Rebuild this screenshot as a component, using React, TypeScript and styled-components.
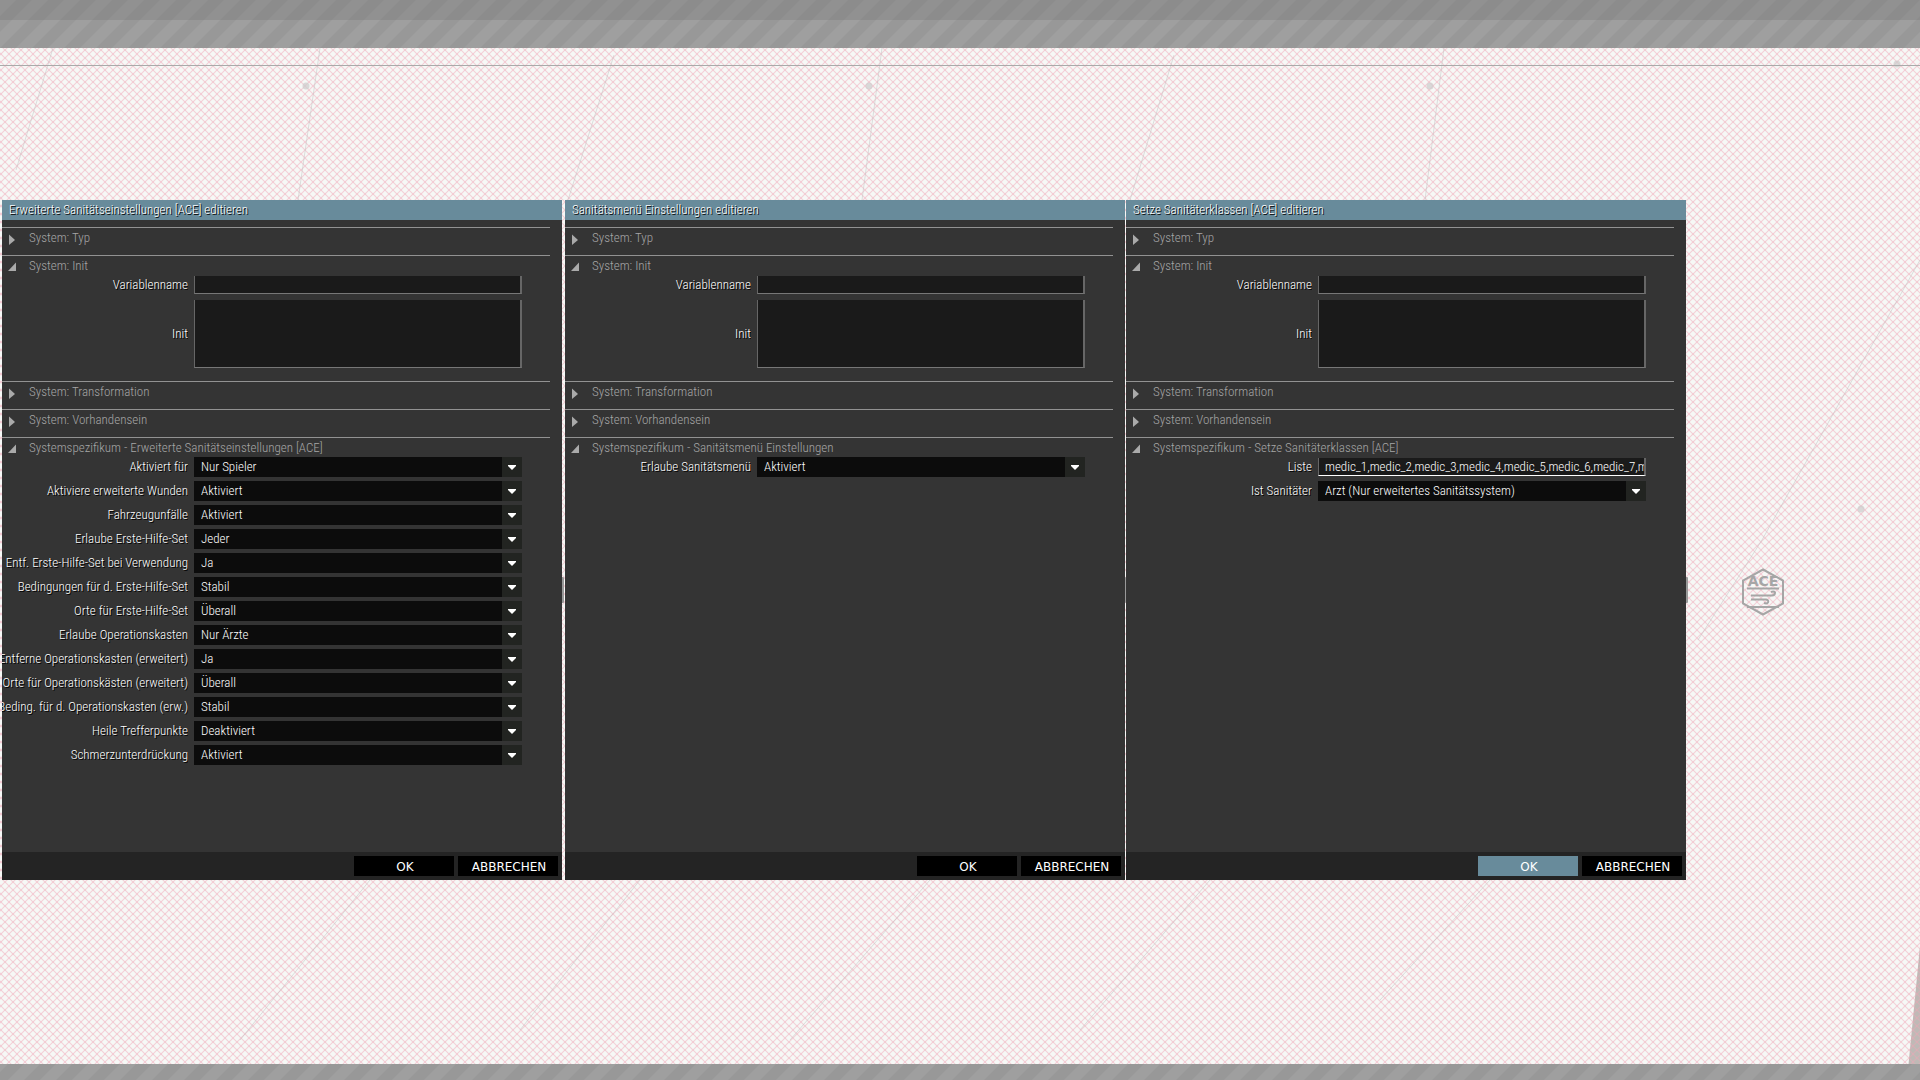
import React, { useId, useState } from "react";
import styled, { createGlobalStyle } from "styled-components";

const ui = '"Roboto Condensed", Roboto, sans-serif';
const accent = "#688b9b";

const GlobalStyle = createGlobalStyle`
  *, *::before, *::after { box-sizing: border-box; }
  body { margin: 0; background: #f7f5f3; overflow: hidden; }
`;

const Page = styled.div`
  position: relative;
  min-height: 100vh;
  display: flex;
  flex-direction: column;
  font: 300 13px/20px ${ui};
  color: #fff;
`;

const Map = styled.svg`
  position: absolute;
  inset: 0;
  width: 100%;
  height: 100%;
`;

const Workspace = styled.main`
  position: relative;
  flex: 1;
  display: flex;
  align-items: center;
  padding: 0 234px 0 2px;
`;

const Panel = styled.form<{ $space: number }>`
  flex: 1 1 0;
  min-width: 0;
  min-height: 680px;
  margin-left: ${(p) => p.$space}px;
  display: flex;
  flex-direction: column;
  background: #343434;
`;

const Title = styled.h2`
  margin: 0;
  padding: 0 7px;
  height: 20px;
  font: inherit;
  background: ${accent};
  text-shadow: 1px 1px 0 #000;
`;

const Body = styled.div`
  flex: 1;
  padding: 7px 12px 0 0;
`;

const SectionBox = styled.section`
  border-top: 1px solid #929292;
  padding-bottom: 8px;
`;

const SectionToggle = styled.button`
  display: flex;
  align-items: center;
  gap: 10px;
  width: 100%;
  height: 19px;
  padding: 0 6px;
  border: 0;
  background: none;
  color: #a6a6a6;
  font: inherit;
  text-align: left;
  svg { flex: none; margin-top: 4px; }
`;

const Row = styled.div`
  display: grid;
  grid-template-columns: 186px minmax(0, 1fr);
  column-gap: 6px;
  align-items: center;
  margin-bottom: 4px;
  padding-right: 28px;
`;

const Label = styled.label`
  display: flex;
  justify-content: flex-end;
  overflow: hidden;
  white-space: nowrap;
  text-shadow: 1px 1px 0 #000;
`;

const TextBox = styled.input<{ $active?: boolean }>`
  width: 100%;
  height: 18px;
  margin: 1px 0;
  padding: 0 0 0 6px;
  border: solid #666;
  border-width: 0 2px 1px 1px;
  border-bottom-color: ${(p) => (p.$active ? "#fff" : "#777")};
  border-radius: 0;
  outline: 0;
  background: #1a1a1a;
  color: inherit;
  font: inherit;
`;

const TextArea = styled.textarea`
  display: block;
  width: 100%;
  height: 68px;
  margin: 1px 0;
  padding: 0 6px;
  border: solid #666;
  border-width: 0 2px 1px 1px;
  border-bottom-color: #777;
  border-radius: 0;
  outline: 0;
  resize: none;
  background: #1a1a1a;
  color: inherit;
  font: inherit;
`;

const SelectBox = styled.div`
  display: flex;
  position: relative;
`;

const Select = styled.select`
  appearance: none;
  width: 100%;
  height: 20px;
  padding: 0 24px 0 7px;
  border: 0;
  border-radius: 0;
  outline: 0;
  background: #0c0c0c;
  color: inherit;
  font: inherit;
`;

const SelectArrow = styled.span`
  position: absolute;
  inset: 0 0 0 auto;
  width: 20px;
  display: grid;
  place-items: center;
  background: #222421;
  pointer-events: none;
`;

const Footer = styled.footer`
  display: flex;
  justify-content: flex-end;
  gap: 4px;
  padding: 4px;
  background: #242424;
`;

const ActionButton = styled.button<{ $highlight?: boolean }>`
  width: 100px;
  height: 20px;
  padding: 2px 0 0 2px;
  border: 0;
  background: ${(p) => (p.$highlight ? accent : "#000")};
  color: #fff;
  font: 400 12px/18px "DejaVu Sans", sans-serif;
`;

function Section({ title, open = false, children }: { title: string; open?: boolean; children?: React.ReactNode }) {
  const [expanded, setExpanded] = useState(open);
  return (
    <SectionBox>
      <SectionToggle type="button" aria-expanded={expanded} onClick={() => setExpanded(!expanded)}>
        <svg width="11" height="12" viewBox="0 0 11 12" fill="#aaa" aria-hidden="true">
          <path d={expanded ? "M8 .5V9H0Z" : "M1 .5L7 6L1 11Z"} />
        </svg>
        {title}
      </SectionToggle>
      {expanded && children}
    </SectionBox>
  );
}

function Choice({ label, value }: { label: string; value: string }) {
  const id = useId();
  return (
    <Row>
      <Label htmlFor={id}>{label}</Label>
      <SelectBox>
        <Select id={id} defaultValue={value}>
          <option>{value}</option>
        </Select>
        <SelectArrow>
          <svg width="8" height="5" viewBox="0 0 8 5" fill="#fff" aria-hidden="true"><path d="M0 0H8V1L4 5L0 1Z" /></svg>
        </SelectArrow>
      </SelectBox>
    </Row>
  );
}

function TextField({ label, value = "", active }: { label: string; value?: string; active?: boolean }) {
  const id = useId();
  return (
    <Row>
      <Label htmlFor={id}>{label}</Label>
      <TextBox id={id} type="text" defaultValue={value} $active={active} />
    </Row>
  );
}

function InitField() {
  const id = useId();
  return (
    <Row>
      <Label htmlFor={id}>Init</Label>
      <TextArea id={id} />
    </Row>
  );
}

type DialogProps = { title: string; specific: string; space?: number; okActive?: boolean; children: React.ReactNode };

function Dialog({ title, specific, space = 0, okActive, children }: DialogProps) {
  return (
    <Panel $space={space} onSubmit={(e) => e.preventDefault()}>
      <Title>{title}</Title>
      <Body>
        <Section title="System: Typ" />
        <Section title="System: Init" open>
          <TextField label="Variablenname" />
          <InitField />
        </Section>
        <Section title="System: Transformation" />
        <Section title="System: Vorhandensein" />
        <Section title={`Systemspezifikum - ${specific}`} open>{children}</Section>
      </Body>
      <Footer>
        <ActionButton type="submit" $highlight={okActive}>OK</ActionButton>
        <ActionButton type="button">ABBRECHEN</ActionButton>
      </Footer>
    </Panel>
  );
}

const medicalSettings: [string, string][] = [
  ["Aktiviert für", "Nur Spieler"],
  ["Aktiviere erweiterte Wunden", "Aktiviert"],
  ["Fahrzeugunfälle", "Aktiviert"],
  ["Erlaube Erste-Hilfe-Set", "Jeder"],
  ["Entf. Erste-Hilfe-Set bei Verwendung", "Ja"],
  ["Bedingungen für d. Erste-Hilfe-Set", "Stabil"],
  ["Orte für Erste-Hilfe-Set", "Überall"],
  ["Erlaube Operationskasten", "Nur Ärzte"],
  ["Entferne Operationskasten (erweitert)", "Ja"],
  ["Orte für Operationskästen (erweitert)", "Überall"],
  ["Beding. für d. Operationskasten (erw.)", "Stabil"],
  ["Heile Trefferpunkte", "Deaktiviert"],
  ["Schmerzunterdrückung", "Aktiviert"],
];

const contours = [
  "M53 48L16 170", "M320 48L298 200", "M614 55L568 200", "M882 48L862 200", "M1174 55L1130 200",
  "M1444 48L1425 200", "M1920 260L1762 540L1698 640", "M370 880L240 1040",
  "M640 880L520 1030", "M930 880L790 1040", "M1210 880L1080 1030", "M1490 880L1380 1000",
];
const markers = [[306, 86], [869, 86], [1430, 86], [1897, 64], [1861, 509]];

function MapBackdrop() {
  return (
    <Map viewBox="0 0 1920 1080" preserveAspectRatio="xMidYMid slice" aria-hidden="true">
      <defs>
        <pattern id="hatch" x="5" y="2" width="8" height="8" patternUnits="userSpaceOnUse">
          <path d="M-1 -1L9 9M-1 7L1 9M7 -1L9 1" stroke="#f0a4b4" strokeOpacity=".46" strokeWidth="1.2" />
          <path d="M-1 9L9 -1M-1 1L1 -1M7 9L9 7" stroke="#f0a4b4" strokeOpacity=".46" strokeWidth="1.2" />
        </pattern>
        <pattern id="stripes" width="32" height="32" patternUnits="userSpaceOnUse">
          <path d="M0 16L16 0H32L0 32ZM16 32L32 16V32Z" fill="#888" fillOpacity=".3" />
        </pattern>
      </defs>
      <rect width="1920" height="1080" fill="#f6f8f6" />
      <path d="M1920 946L1907 1080H1920Z" fill="#bfb9b6" />
      <rect width="1920" height="1080" fill="url(#hatch)" />
      <g fill="none" stroke="#c4c4c4" strokeOpacity=".55">
        {contours.map((d) => <path key={d} d={d} />)}
      </g>
      {markers.map(([x, y]) => <circle key={x} cx={x} cy={y} r="3.5" fill="#ccc" fillOpacity=".7" />)}
      <rect y="65" width="1920" height="1" fill="#aaa" />
      <rect width="1920" height="48" fill="#9f9f9f" />
      <rect y="1064" width="1920" height="16" fill="#9f9f9f" />
      <rect width="1920" height="48" fill="url(#stripes)" />
      <rect y="1064" width="1920" height="16" fill="url(#stripes)" />
      <rect width="1920" height="20" fill="#666" fillOpacity=".25" />
      {[560, 1122, 1684].map((x) => <rect key={x} x={x} y="577" width="4" height="26" rx="1" fill="#999" />)}
      <g fill="none" stroke="#a6a6a6" strokeWidth="2">
        <path d="M1763 569.500L1783 580.500V603.500L1763 614.500L1743 603.500V580.500Z" />
        <path d="M1747 588.500H1779M1747 607H1779" />
        <path d="M1751 595.500H1772Q1775 595.500 1775 592.500Q1774 591 1771 592M1751 599.500H1766Q1769 600 1768 602.500Q1767 604 1764 603" />
      </g>
      <text x="1763" y="586" textAnchor="middle" fill="#a6a6a6" fontFamily="DejaVu Sans, sans-serif" fontWeight="700" fontSize="14">ACE</text>
    </Map>
  );
}

export default function App() {
  return (
    <Page>
      <GlobalStyle />
      <MapBackdrop />
      <Workspace>
        <Dialog title="Erweiterte Sanitätseinstellungen [ACE] editieren" specific="Erweiterte Sanitätseinstellungen [ACE]">
          {medicalSettings.map(([label, value]) => <Choice key={label} label={label} value={value} />)}
        </Dialog>
        <Dialog title="Sanitätsmenü Einstellungen editieren" specific="Sanitätsmenü Einstellungen" space={3}>
          <Choice label="Erlaube Sanitätsmenü" value="Aktiviert" />
        </Dialog>
        <Dialog title="Setze Sanitäterklassen [ACE] editieren" specific="Setze Sanitäterklassen [ACE]" space={1} okActive>
          <TextField label="Liste" value="medic_1,medic_2,medic_3,medic_4,medic_5,medic_6,medic_7,medic_8" active />
          <Choice label="Ist Sanitäter" value="Arzt (Nur erweitertes Sanitätssystem)" />
        </Dialog>
      </Workspace>
    </Page>
  );
}
